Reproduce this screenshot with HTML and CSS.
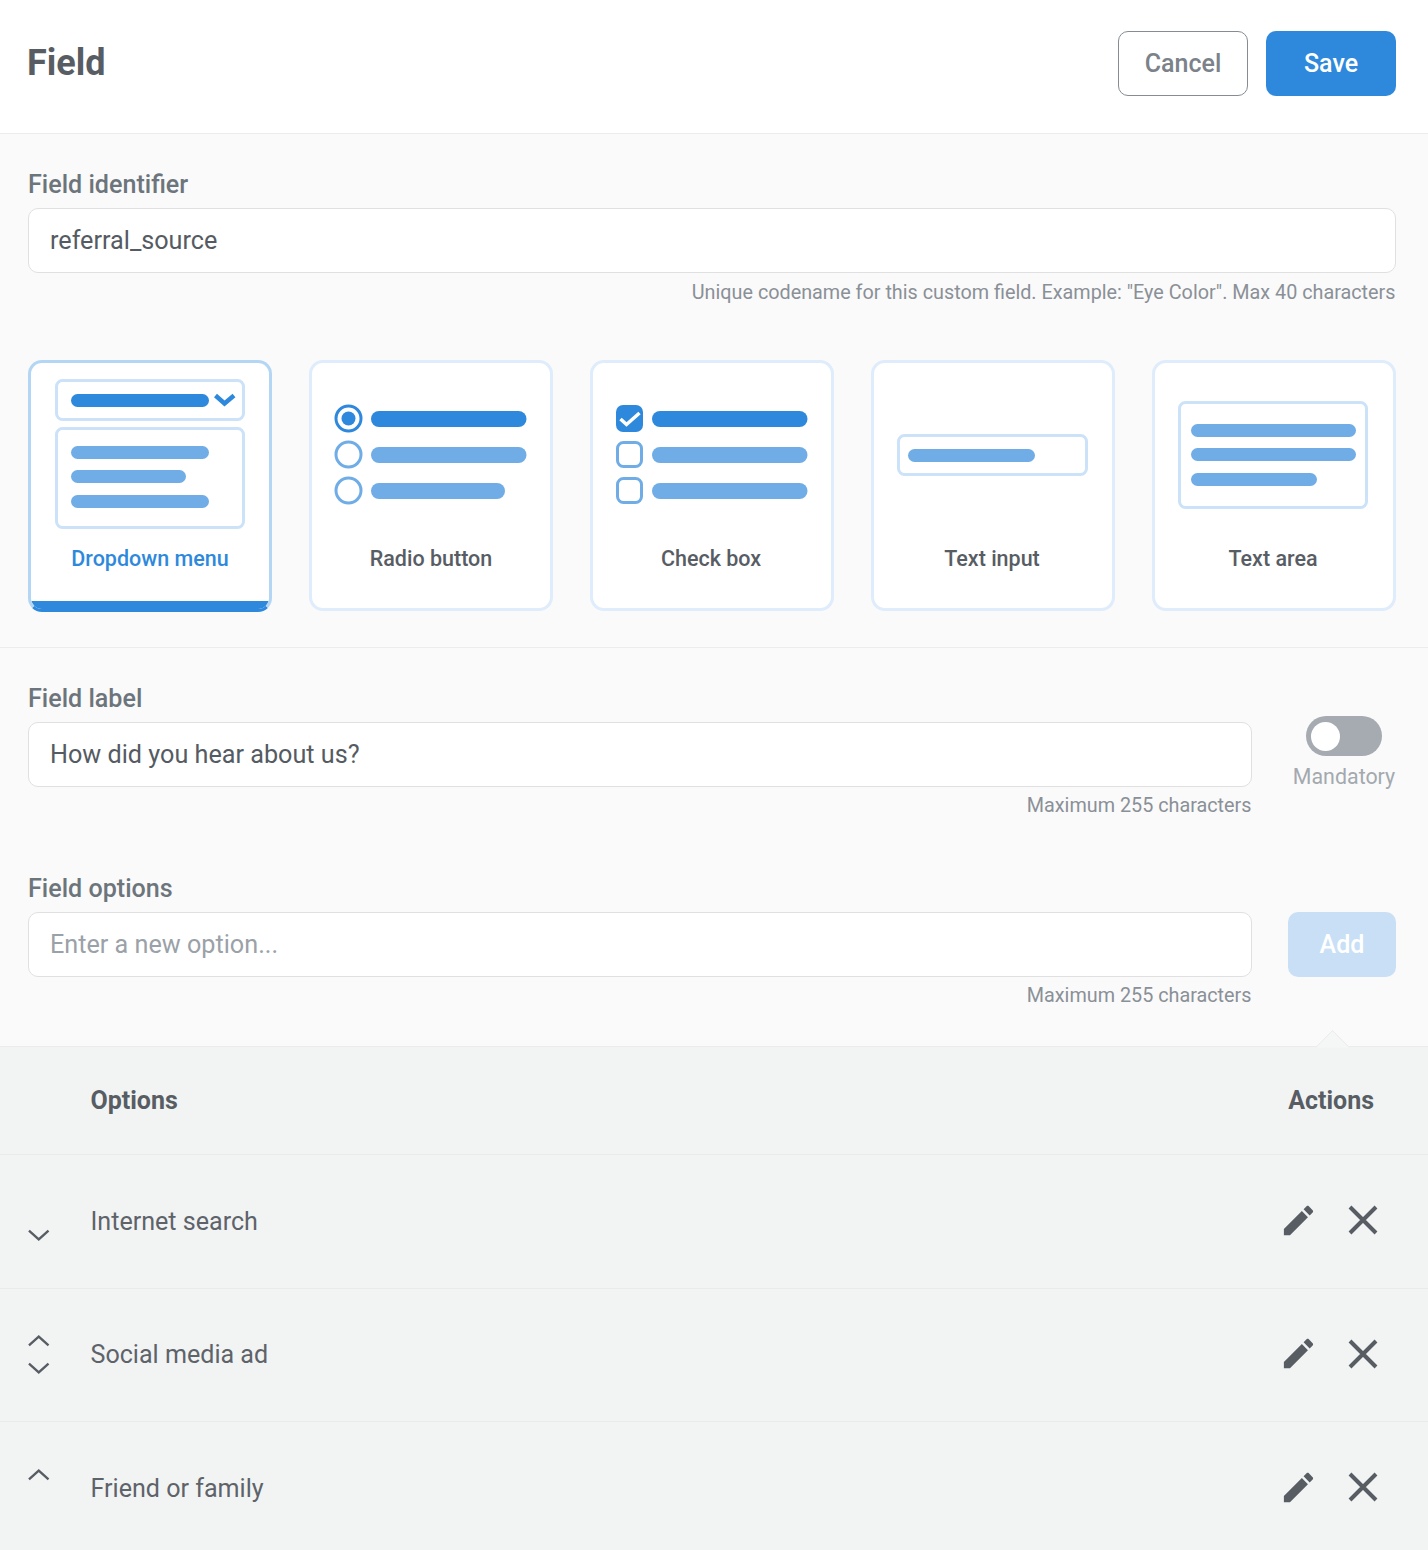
FILE: index.html
```html
<!DOCTYPE html>
<html lang="en">
<head>
<meta charset="utf-8">
<title>Field</title>
<link rel="stylesheet" href="styles.css">
</head>
<body>
<header class="topbar">
  <h1 class="title">Field</h1>
  <div class="top-actions">
    <button class="btn btn-outline">Cancel</button>
    <button class="btn btn-primary">Save</button>
  </div>
</header>

<section class="panel panel-type">
  <div class="field">
    <label class="label">Field identifier</label>
    <input class="input" value="referral_source">
    <p class="hint hint-first">Unique codename for this custom field. Example: "Eye Color". Max 40 characters</p>
  </div>
  <div class="cards">
    <div class="card card-active">
      <svg class="art" viewBox="0 0 238 172">
        <rect class="box" x="25.5" y="17.5" width="187" height="39" rx="6"/>
        <rect class="box" x="25.5" y="65.5" width="187" height="99" rx="6"/>
        <rect class="bar-on" x="40" y="31" width="138" height="13" rx="6.5"/>
        <path class="chev" d="M184.500 32.500l9 8 9.500-8"/>
        <rect class="bar" x="40" y="83" width="138" height="13" rx="6.500"/>
        <rect class="bar" x="40" y="107" width="115" height="13" rx="6.500"/>
        <rect class="bar" x="40" y="132" width="138" height="13" rx="6.500"/>
      </svg>
      <span class="card-label">Dropdown menu</span>
    </div>
    <div class="card">
      <svg class="art" viewBox="0 0 238 172">
        <circle class="mark-on" cx="36.500" cy="55.500" r="12.500"/>
        <circle class="dot" cx="36.500" cy="55.500" r="7"/>
        <circle class="mark" cx="36.500" cy="91.500" r="12.500"/>
        <circle class="mark" cx="36.500" cy="127.500" r="12.500"/>
        <rect class="bar-on" x="59" y="48" width="155.500" height="16" rx="8"/>
        <rect class="bar" x="59" y="84" width="155.500" height="16" rx="8"/>
        <rect class="bar" x="59" y="120" width="134" height="16" rx="8"/>
      </svg>
      <span class="card-label">Radio button</span>
    </div>
    <div class="card">
      <svg class="art" viewBox="0 0 238 172">
        <rect class="tick-box" x="23" y="42" width="27" height="27" rx="7"/>
        <path class="tick" d="M27.500 56l6 5.500L46.500 50"/>
        <rect class="mark" x="24.500" y="79.500" width="24" height="24" rx="6"/>
        <rect class="mark" x="24.500" y="115.500" width="24" height="24" rx="6"/>
        <rect class="bar-on" x="59" y="48" width="155.500" height="16" rx="8"/>
        <rect class="bar" x="59" y="84" width="155.500" height="16" rx="8"/>
        <rect class="bar" x="59" y="120" width="155.500" height="16" rx="8"/>
      </svg>
      <span class="card-label">Check box</span>
    </div>
    <div class="card">
      <svg class="art" viewBox="0 0 238 172">
        <rect class="box" x="24.500" y="72.500" width="188" height="39" rx="6"/>
        <rect class="bar" x="34" y="86" width="127" height="13" rx="6.500"/>
      </svg>
      <span class="card-label">Text input</span>
    </div>
    <div class="card">
      <svg class="art" viewBox="0 0 238 172">
        <rect class="box" x="24.500" y="39.500" width="187" height="105" rx="6"/>
        <rect class="bar" x="36" y="61" width="165" height="13" rx="6.500"/>
        <rect class="bar" x="36" y="85" width="165" height="13" rx="6.500"/>
        <rect class="bar" x="36" y="110" width="126" height="13" rx="6.500"/>
      </svg>
      <span class="card-label">Text area</span>
    </div>
  </div>
</section>

<section class="panel panel-details">
  <div class="row">
    <div class="field grow">
      <label class="label">Field label</label>
      <input class="input" value="How did you hear about us?">
      <p class="hint">Maximum 255 characters</p>
    </div>
    <div class="side side-toggle">
      <span class="toggle"><span class="knob"></span></span>
      <span class="toggle-label">Mandatory</span>
    </div>
  </div>
  <div class="row row-options">
    <div class="field grow">
      <label class="label">Field options</label>
      <input class="input" placeholder="Enter a new option...">
      <p class="hint">Maximum 255 characters</p>
    </div>
    <div class="side side-add">
      <button class="btn btn-add">Add</button>
    </div>
  </div>
</section>

<section class="options">
  <div class="opt-head">
    <span class="opt-name">Options</span>
    <span>Actions</span>
  </div>
  <div class="opt-row">
    <div class="movers">
      <span class="mover"></span>
      <span class="mover"><svg viewBox="0 0 22 12"><path d="M1 1.500l10 9 10-9"/></svg></span>
    </div>
    <span class="opt-text">Internet search</span>
    <div class="row-actions">
      <svg class="ico-edit" viewBox="0 0 24 24"><path d="M3 17.250V21h3.750L17.810 9.940l-3.750-3.750L3 17.250zM20.710 7.040c.39-.39.39-1.020 0-1.410l-2.340-2.340c-.39-.39-1.020-.39-1.410 0l-1.830 1.830 3.750 3.750 1.830-1.830z"/></svg>
      <svg class="ico-x" viewBox="0 0 30 30"><path d="M2 2l26 26M28 2L2 28"/></svg>
    </div>
  </div>
  <div class="opt-row">
    <div class="movers">
      <span class="mover"><svg viewBox="0 0 22 12"><path d="M1 10.500l10-9 10 9"/></svg></span>
      <span class="mover"><svg viewBox="0 0 22 12"><path d="M1 1.500l10 9 10-9"/></svg></span>
    </div>
    <span class="opt-text">Social media ad</span>
    <div class="row-actions">
      <svg class="ico-edit" viewBox="0 0 24 24"><path d="M3 17.250V21h3.750L17.810 9.940l-3.750-3.750L3 17.250zM20.710 7.040c.39-.39.39-1.020 0-1.410l-2.340-2.340c-.39-.39-1.020-.39-1.410 0l-1.830 1.830 3.750 3.750 1.830-1.830z"/></svg>
      <svg class="ico-x" viewBox="0 0 30 30"><path d="M2 2l26 26M28 2L2 28"/></svg>
    </div>
  </div>
  <div class="opt-row">
    <div class="movers">
      <span class="mover"><svg viewBox="0 0 22 12"><path d="M1 10.500l10-9 10 9"/></svg></span>
      <span class="mover"></span>
    </div>
    <span class="opt-text">Friend or family</span>
    <div class="row-actions">
      <svg class="ico-edit" viewBox="0 0 24 24"><path d="M3 17.250V21h3.750L17.810 9.940l-3.750-3.750L3 17.250zM20.710 7.040c.39-.39.39-1.020 0-1.410l-2.340-2.340c-.39-.39-1.020-.39-1.410 0l-1.830 1.830 3.750 3.750 1.830-1.830z"/></svg>
      <svg class="ico-x" viewBox="0 0 30 30"><path d="M2 2l26 26M28 2L2 28"/></svg>
    </div>
  </div>
</section>
</body>
</html>
```

FILE: styles.css
```css
* { box-sizing: border-box; }
html, body { margin: 0; padding: 0; }
body {
  background: #f2f4f4;
  font-family: Roboto, "Liberation Sans", sans-serif;
  color: #585d64;
  overflow-x: hidden;
}

.topbar {
  height: 134px;
  background: #fff;
  border-bottom: 1px solid #ececec;
  display: flex;
  align-items: center;
  justify-content: space-between;
  padding: 0 32px 6px 28px;
}
.title { margin: 0 0 2px -1px; font-size: 36px; font-weight: 700; color: #585d64; }
.top-actions { display: flex; gap: 18px; }

.btn {
  width: 130px;
  height: 65px;
  border-radius: 10px;
  font: 500 25px Roboto, sans-serif;
  padding: 0;
}
.btn-outline { background: #fff; border: 1px solid #868c92; color: #7b8289; }
.btn-primary { background: #2e89dc; border: 0; color: #fff; }
.btn-add { width: 108px; background: #c9dff6; border: 0; color: #fff; }

.panel { background: #fafafa; padding: 38px 32px 0 28px; }
.panel-type { padding-bottom: 36px; border-bottom: 1px solid #ececec; }
.panel-details { padding-bottom: 38px; }

.label {
  display: block;
  height: 24px;
  line-height: 26px;
  font-size: 25.1px;
  font-weight: 500;
  color: #6d757c;
  margin-bottom: 12px;
}
.input {
  display: block;
  width: 100%;
  height: 65px;
  padding: 0 21px;
  background: #fff;
  border: 1px solid #e0e0e0;
  border-radius: 10px;
  font: 400 25.2px Roboto, sans-serif;
  color: #555b62;
  outline: 0;
}
.input::placeholder { color: #9aa1a8; opacity: 1; }
.hint {
  margin: 7px 0 0;
  padding-right: 0.5px;
  line-height: 24px;
  font-size: 19.8px;
  text-align: right;
  color: #8a9097;
}
.hint-first { line-height: 26px; height: 24px; }

.cards { display: flex; align-items: flex-start; gap: 37px; margin: 56px 0.5px 0 0; }
.card {
  flex: 1;
  height: 251px;
  background: #fff;
  border: 3px solid #deecfb;
  border-radius: 14px;
  display: flex;
  flex-direction: column;
}
.card-active {
  height: 252px;
  margin-bottom: -1px;
  border-color: #b3d6f5;
  border-bottom-color: #2e89dc;
  background: linear-gradient(to top, #2e89dc 8px, #fff 8px) padding-box;
}
.art { display: block; width: 238px; height: 172px; flex: none; }
.card-label {
  height: 48px;
  line-height: 48px;
  text-align: center;
  font-size: 21.5px;
  font-weight: 500;
}
.card:nth-child(n+3) .card-label { padding-right: 2px; }
.card-active .card-label { color: #2e89dc; }

.box { fill: #fff; stroke: #cce2f8; stroke-width: 3; }
.bar { fill: #70ade6; }
.bar-on { fill: #2e89dc; }
.chev { fill: none; stroke: #2e89dc; stroke-width: 4.5; }
.mark { fill: #fff; stroke: #70ade6; stroke-width: 3; }
.mark-on { fill: #fff; stroke: #2e89dc; stroke-width: 3; }
.dot { fill: #2e89dc; }
.tick-box { fill: #2e89dc; }
.tick { fill: none; stroke: #fff; stroke-width: 3.5; }

.row { display: flex; gap: 36px; }
.row-options { margin-top: 58px; }
.grow { flex: 1; min-width: 0; }
.side { width: 108px; flex: none; display: flex; flex-direction: column; align-items: center; }
.side-toggle { padding: 30px 0 0 4px; }
.side-add { padding-top: 36px; }
.toggle {
  width: 76px;
  height: 40px;
  border-radius: 20px;
  background: #a6abb1;
  display: flex;
  align-items: center;
  padding-left: 5px;
}
.knob { width: 29px; height: 29px; border-radius: 50%; background: #fff; }
.toggle-label { margin-top: 9px; line-height: 24px; font-size: 21.4px; color: #a3a9af; white-space: nowrap; }

.options { position: relative; background: #f2f4f4; border-top: 1px solid #ececec; }
.options::before {
  content: "";
  position: absolute;
  top: -12px;
  right: 83px;
  width: 24px;
  height: 24px;
  background: #f5f6f6;
  border-top: 1px solid #ececec;
  border-left: 1px solid #ececec;
  transform: rotate(45deg);
  clip-path: polygon(0 0, 100% 0, 0 100%);
}
.opt-head {
  height: 108px;
  border-bottom: 1px solid #e9ebeb;
  display: flex;
  align-items: center;
  justify-content: space-between;
  padding: 0 54px 1px 90.5px;
  font-size: 25px;
  font-weight: 700;
}
.opt-row {
  height: 133.5px;
  border-bottom: 1px solid #e9ebeb;
  display: flex;
  align-items: center;
  padding: 0 50px 0 28px;
}
.movers { width: 62.5px; flex: none; display: flex; flex-direction: column; }
.mover { height: 27px; display: flex; align-items: center; }
.mover svg { display: block; width: 21.5px; height: 12px; fill: none; stroke: #585d64; stroke-width: 2.4; }
.opt-text { flex: 1; font-size: 25.1px; color: #5e636a; }
.row-actions { display: flex; align-items: center; gap: 30px; padding-bottom: 2px; }
.ico-edit { display: block; width: 39px; height: 39px; fill: #585d64; margin: -5px; }
.ico-x { display: block; width: 30px; height: 30px; fill: none; stroke: #585d64; stroke-width: 4; margin-left: 5px; }
```
